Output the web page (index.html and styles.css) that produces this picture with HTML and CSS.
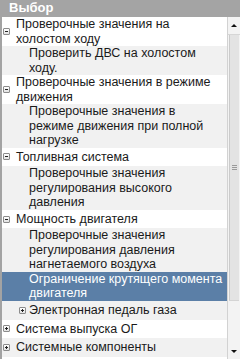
FILE: index.html
```html
<!DOCTYPE html>
<html lang="ru">
<head>
<meta charset="utf-8">
<title>Выбор</title>
<link rel="stylesheet" href="styles.css">
</head>
<body>
<div class="panel">
  <div class="header">Выбор</div>
  <div class="content">
    <div class="tree">
      <div class="row l1 white"><span class="slot"><span class="tog minus"></span></span><span class="txt">Проверочные значения на<br>холостом ходу</span></div>
      <div class="row l2 gray"><span class="txt">Проверить ДВС на холостом<br>ходу.</span></div>
      <div class="row l1 white"><span class="slot"><span class="tog minus"></span></span><span class="txt">Проверочные значения в режиме<br>движения</span></div>
      <div class="row l2 gray"><span class="txt">Проверочные значения в<br>режиме движения при полной<br>нагрузке</span></div>
      <div class="row l1 white single"><span class="slot"><span class="tog minus"></span></span><span class="txt">Топливная система</span></div>
      <div class="row l2 gray"><span class="txt">Проверочные значения<br>регулирования высокого<br>давления</span></div>
      <div class="row l1 white single"><span class="slot"><span class="tog minus"></span></span><span class="txt">Мощность двигателя</span></div>
      <div class="row l2 gray"><span class="txt">Проверочные значения<br>регулирования давления<br>нагнетаемого воздуха</span></div>
      <div class="row l2 selected"><span class="txt">Ограничение крутящего момента<br>двигателя</span></div>
      <div class="row l2 gray single"><span class="slot"><span class="tog plus"></span></span><span class="txt">Электронная педаль газа</span></div>
      <div class="row l1 white single"><span class="slot"><span class="tog plus"></span></span><span class="txt">Система выпуска ОГ</span></div>
      <div class="row l1 gray single"><span class="slot"><span class="tog plus"></span></span><span class="txt">Системные компоненты</span></div>
    </div>
    <div class="scrollbar">
      <div class="btn up"><span class="tri-up"></span></div>
      <div class="thumb"><span class="grip"></span></div>
      <div class="track"></div>
      <div class="btn down"><span class="tri-down"></span></div>
    </div>
  </div>
</div>
</body>
</html>
```
FILE: styles.css
```css
* { box-sizing: border-box; }
html, body { margin: 0; padding: 0; }
body {
  width: 240px;
  height: 359px;
  overflow: hidden;
  background: #ffffff;
  font-family: "Liberation Sans", Arial, sans-serif;
  font-size: 12.5px;
  color: #1a1a1a;
}
.panel {
  width: 240px;
  height: 359px;
  display: flex;
  flex-direction: column;
}
.header {
  height: 17px;
  flex: none;
  background: #a4a4a4;
  color: #ffffff;
  font-weight: bold;
  font-size: 13px;
  line-height: 16px;
  padding-left: 9px;
}
.content {
  flex: 1;
  display: flex;
  min-height: 0;
  border-left: 2px solid #a3a3a3;
}
.tree {
  flex: 1;
  min-width: 0;
  overflow: hidden;
}
.row {
  display: flex;
  align-items: center;
  line-height: 14.5px;
}
.row.single { padding-top: 2.1px; padding-bottom: 2.1px; }
.row.white { background: #ffffff; }
.row.gray { background: #f1f1f1; }
.row.selected { background: #5b7fa7; color: #ffffff; }
.row.l1 { padding-left: 1px; }
.row.l1 .slot { width: 13px; }
.row.l2 { padding-left: 27px; }
.row.l2 .slot { width: 12px; margin-left: -12px; padding-left: 2px; }
.slot { flex: none; display: flex; align-items: center; }
.txt { flex: 1; min-width: 0; white-space: nowrap; }
.tog {
  display: block;
  width: 7px;
  height: 7px;
  border: 1px solid #8c8c8c;
  border-radius: 1px;
  background: linear-gradient(#ffffff, #e2e2e2);
  position: relative;
}
.tog::before {
  content: "";
  position: absolute;
  left: 1px;
  top: 2px;
  width: 3px;
  height: 1px;
  background: #222;
}
.tog.plus::after {
  content: "";
  position: absolute;
  left: 2px;
  top: 1px;
  width: 1px;
  height: 3px;
  background: #222;
}
.scrollbar {
  flex: none;
  width: 13px;
  display: flex;
  flex-direction: column;
  background: #f3f3f3;
  border-left: 1px solid #d2d2d2;
}
.btn {
  flex: none;
  display: flex;
  align-items: center;
  justify-content: center;
}
.btn.up { height: 18px; border-bottom: 1px solid #d6d6d6; }
.btn.down { height: 16px; }
.tri-up {
  width: 0; height: 0;
  border-left: 3px solid transparent;
  border-right: 3px solid transparent;
  border-bottom: 3px solid #111;
}
.tri-down {
  width: 0; height: 0;
  border-left: 3px solid transparent;
  border-right: 3px solid transparent;
  border-top: 3px solid #111;
}
.thumb {
  flex: none;
  height: 266px;
  margin: 0 1px 0 1px;
  background: #e3e3e3;
  border-left: 1px solid #cbcbcb;
  border-bottom: 1px solid #d4d4d4;
  display: flex;
  align-items: center;
  justify-content: center;
}
.track { flex: 1; }
.grip {
  width: 5px;
  height: 5px;
  background: repeating-linear-gradient(#9a9a9a 0 1px, transparent 1px 2px);
}
```
